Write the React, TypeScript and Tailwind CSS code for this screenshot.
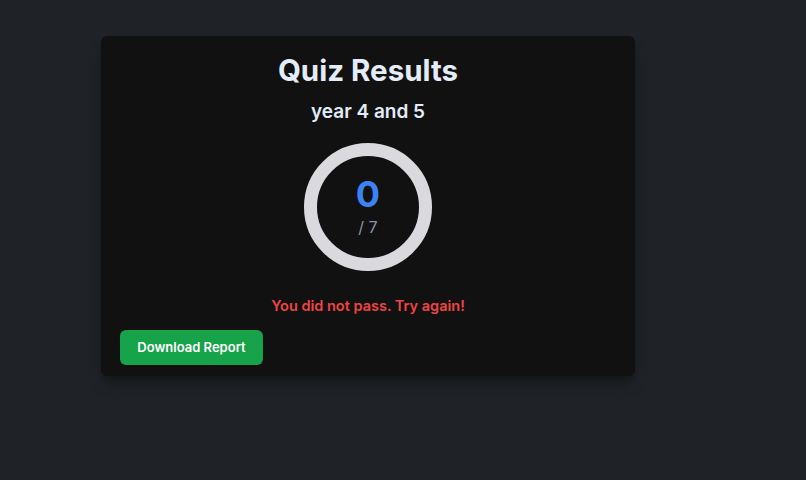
export default function App() {
  const score = 0;
  const total = 7;

  return (
    <div className="min-h-[480px] w-full bg-[#1f2226] pt-[36px] font-['Inter',sans-serif]">
      <div className="ml-[101px] w-[534px] rounded-md bg-[#111111] px-[19px] pt-[16px] pb-[11px] shadow-lg shadow-black/30">
        <h1 className="text-center text-[29.5px] leading-9 font-bold text-[#e3ecf8]">Quiz Results</h1>
        <h2 className="mt-[10px] text-center text-[19px] leading-7 font-semibold text-[#e3ecf8]">year 4 and 5</h2>

        <div className="mt-[17px] flex justify-center">
          <div className="flex h-[128px] w-[128px] flex-col items-center justify-center rounded-full border-[13px] border-[#d9d9de] pb-[3px]">
            <span className="text-4xl font-bold leading-10 text-[#3b82f6]">{score}</span>
            <span className="mt-[3px] text-base leading-5 text-[#8a94a4]">/ {total}</span>
          </div>
        </div>

        <p className="mt-[23px] text-center text-[14.5px] leading-6 font-semibold text-[#ef4444]">
          You did not pass. Try again!
        </p>

        <button className="mt-[12px] h-[35px] w-[143px] rounded-md bg-[#16a34a] text-[13px] font-semibold text-white">
          Download Report
        </button>
      </div>
    </div>
  );
}
